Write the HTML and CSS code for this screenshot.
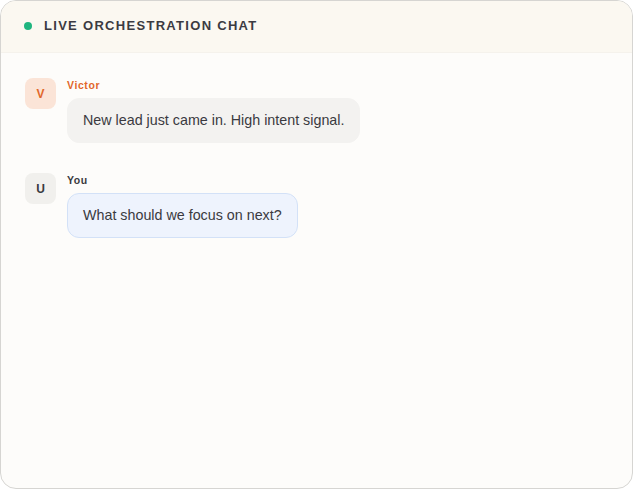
FILE: index.html
```html
<!DOCTYPE html>
<html lang="en">
<head>
    <meta charset="UTF-8" />
    <title>Live Orchestration Chat</title>
    <link rel="stylesheet" href="styles.css">
</head>
<body>

<div class="chat-card">
    <!-- header -->
    <div class="chat-header">
        <span class="live-dot"></span>
        <span class="chat-title">LIVE ORCHESTRATION CHAT</span>
    </div>

    <!-- messages -->
    <div class="chat-body">
        <div class="message">
            <div class="avatar avatar-agent">V</div>
            <div class="message-content">
                <div class="sender sender-agent">Victor</div>
                <div class="bubble">New lead just came in. High intent signal.</div>
            </div>
        </div>

        <div class="message">
            <div class="avatar avatar-user">U</div>
            <div class="message-content">
                <div class="sender">You</div>
                <div class="bubble bubble-user">What should we focus on next?</div>
            </div>
        </div>
    </div>
</div>

</body>
</html>
```

FILE: styles.css
```css
body {
    margin: 0;
    font-family: 'Liberation Sans', Arial, sans-serif;
    background: #ffffff;
    color: #333;
}

.chat-card {
    width: 633px;
    height: 489px;
    box-sizing: border-box;
    border: 1px solid #d6d5d2;
    border-radius: 16px;
    background: #fdfcfa;
    overflow: hidden;
}

.chat-header {
    height: 52px;
    box-sizing: border-box;
    display: flex;
    align-items: center;
    gap: 12px;
    padding: 0 0 2px 23px;
    background: #fbf8f1;
    border-bottom: 1px solid #f5f2ec;
}

.live-dot {
    width: 8px;
    height: 8px;
    border-radius: 50%;
    background: #1fb57f;
}

.chat-title {
    font-size: 13px;
    font-weight: bold;
    letter-spacing: 1.3px;
    color: #3b3b42;
}

.chat-body {
    padding: 25px 24px;
    display: flex;
    flex-direction: column;
    gap: 30px;
}

.message {
    display: flex;
    gap: 11px;
    align-items: flex-start;
}

.avatar {
    width: 31px;
    height: 31px;
    border-radius: 8px;
    display: flex;
    align-items: center;
    justify-content: center;
    font-size: 12px;
    font-weight: bold;
    flex-shrink: 0;
}

.avatar-agent {
    background: #fbe4d7;
    color: #e2672a;
}

.avatar-user {
    background: #f1f0ed;
    color: #3a3a40;
}

.message-content {
    display: flex;
    flex-direction: column;
    align-items: flex-start;
}

.sender {
    font-size: 10.5px;
    font-weight: bold;
    letter-spacing: 0.6px;
    color: #3a3a40;
    line-height: 14px;
    margin-bottom: 6px;
}

.sender-agent {
    color: #e2672a;
}

.bubble {
    background: #f3f2f0;
    border: 1px solid #f3f2f0;
    border-radius: 12px;
    padding: 13px 15px;
    font-size: 14.3px;
    line-height: 17px;
    color: #3a3a40;
}

.bubble-user {
    background: #eef3fd;
    border-color: #d3e1f7;
}
```
